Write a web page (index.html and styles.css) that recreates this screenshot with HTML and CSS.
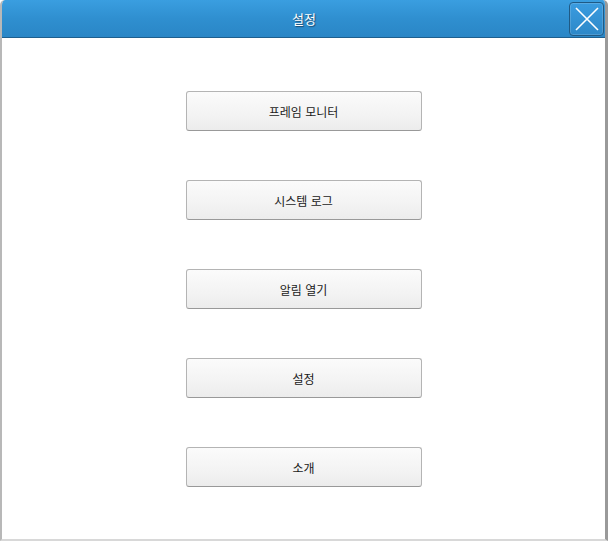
FILE: index.html
```html
<!DOCTYPE html>
<html lang="ko">
<head>
    <meta charset="UTF-8">
    <meta name="viewport" content="width=device-width, initial-scale=1.0">
    <title>설정</title>
    <link rel="stylesheet" href="styles.css">
</head>
<body>
    <div class="window">
        <div class="titlebar">
            <span class="title">설정</span>
            <button class="close-btn" aria-label="닫기">
                <svg width="28" height="28" viewBox="0 0 28 28">
                    <path d="M3 3 L25 25 M25 3 L3 25" stroke="#fff" stroke-width="1.6" fill="none"/>
                </svg>
            </button>
        </div>
        <div class="menu">
            <button class="menu-btn">프레임 모니터</button>
            <button class="menu-btn">시스템 로그</button>
            <button class="menu-btn">알림 열기</button>
            <button class="menu-btn">설정</button>
            <button class="menu-btn">소개</button>
        </div>
    </div>
</body>
</html>
```

FILE: styles.css
```css
html, body {
    margin: 0;
    padding: 0;
    background: #ffffff;
}
body {
    font-family: "Noto Sans CJK KR", "DejaVu Sans", sans-serif;
    width: 608px;
    height: 541px;
    overflow: hidden;
}
.window {
    height: 541px;
    box-sizing: border-box;
    display: flex;
    flex-direction: column;
    border-left: 2px solid #b8b8b8;
    border-right: 3px solid #9a9a9a;
    border-bottom: 2px solid #d8d8d8;
    border-radius: 5px 5px 0 0;
    overflow: hidden;
}
.titlebar {
    height: 38px;
    margin: 0 -3px 0 -2px;
    box-sizing: border-box;
    background: linear-gradient(to bottom, #3a9ee0 0%, #2f8fd0 50%, #2a86c6 100%);
    border-bottom: 1px solid #1e5f8e;
    border-radius: 5px 5px 0 0;
    display: flex;
    align-items: center;
    justify-content: center;
    position: relative;
}
.title {
    color: #ffffff;
    font-size: 13px;
    text-shadow: 1px 1px 1px #1b4a6e;
}
.close-btn {
    position: absolute;
    right: 4px;
    top: 2px;
    width: 35px;
    height: 34px;
    padding: 0;
    background: linear-gradient(to bottom, #3a9ce0, #2d88c8);
    border: 1px solid #1f5a85;
    border-radius: 4px;
    box-shadow: inset 0 0 0 1px rgba(255, 255, 255, 0.15);
    display: flex;
    align-items: center;
    justify-content: center;
    cursor: pointer;
}
.menu {
    flex: 1;
    display: flex;
    flex-direction: column;
    align-items: center;
    gap: 49px;
    padding-top: 53px;
}
.menu-btn {
    width: 236px;
    height: 40px;
    font-family: inherit;
    font-size: 12px;
    color: #1a1a1a;
    background: linear-gradient(to bottom, #fbfbfb 0%, #f3f3f3 60%, #ececec 100%);
    border: 1px solid #b4b4b4;
    border-bottom-color: #999999;
    border-radius: 3px;
    cursor: pointer;
}
.menu-btn:hover {
    background: #e8e8e8;
}
```
